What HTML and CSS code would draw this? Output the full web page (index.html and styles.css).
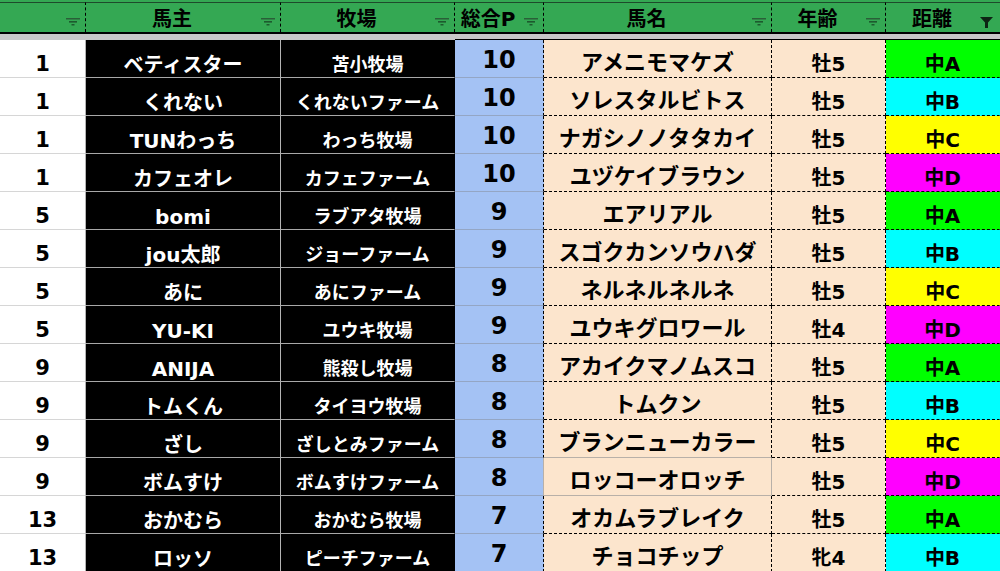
FILE: index.html
```html
<!DOCTYPE html>
<html lang="ja">
<head>
<meta charset="utf-8">
<title>Sheet</title>
<link rel="stylesheet" href="styles.css">
</head>
<body>
<div class="sheet">
  <div class="head">
    <div class="hc"><span class="label"></span><span class="flt"><svg width="14" height="8" viewBox="0 0 14 8"><rect x="0" y="0" width="14" height="1.5" fill="#2a5f38"/><rect x="3" y="3" width="8" height="1.6" fill="#1d5a2e"/><rect x="5.5" y="6" width="3" height="1.5" fill="#1d5a2e"/></svg></span></div>
    <div class="hc"><span class="label">馬主</span><span class="flt"><svg width="14" height="8" viewBox="0 0 14 8"><rect x="0" y="0" width="14" height="1.5" fill="#2a5f38"/><rect x="3" y="3" width="8" height="1.6" fill="#1d5a2e"/><rect x="5.5" y="6" width="3" height="1.5" fill="#1d5a2e"/></svg></span></div>
    <div class="hc"><span class="label">牧場</span><span class="flt"><svg width="14" height="8" viewBox="0 0 14 8"><rect x="0" y="0" width="14" height="1.5" fill="#2a5f38"/><rect x="3" y="3" width="8" height="1.6" fill="#1d5a2e"/><rect x="5.5" y="6" width="3" height="1.5" fill="#1d5a2e"/></svg></span></div>
    <div class="hc"><span class="label">総合P</span><span class="flt"><svg width="14" height="8" viewBox="0 0 14 8"><rect x="0" y="0" width="14" height="1.5" fill="#2a5f38"/><rect x="3" y="3" width="8" height="1.6" fill="#1d5a2e"/><rect x="5.5" y="6" width="3" height="1.5" fill="#1d5a2e"/></svg></span></div>
    <div class="hc"><span class="label">馬名</span><span class="flt"><svg width="14" height="8" viewBox="0 0 14 8"><rect x="0" y="0" width="14" height="1.5" fill="#2a5f38"/><rect x="3" y="3" width="8" height="1.6" fill="#1d5a2e"/><rect x="5.5" y="6" width="3" height="1.5" fill="#1d5a2e"/></svg></span></div>
    <div class="hc"><span class="label">年齢</span><span class="flt"><svg width="14" height="8" viewBox="0 0 14 8"><rect x="0" y="0" width="14" height="1.5" fill="#2a5f38"/><rect x="3" y="3" width="8" height="1.6" fill="#1d5a2e"/><rect x="5.5" y="6" width="3" height="1.5" fill="#1d5a2e"/></svg></span></div>
    <div class="hc"><span class="label">距離</span><span class="flt funnel"><svg width="13" height="11" viewBox="0 0 13 11"><polygon points="0,0 13,0 8,5.5 8,11 5,11 5,5.5" fill="#0d2414"/></svg></span></div>
  </div>
  <div class="band">
    <div class="bc"></div><div class="bc"></div><div class="bc"></div>
    <div class="bc edge"></div><div class="bc edge"></div><div class="bc edge"></div><div class="bc edge"></div>
  </div>

  <div class="row"><div class="c a">1</div><div class="c b">ベティスター</div><div class="c cc">苫小牧場</div><div class="c d">10</div><div class="c e">アメニモマケズ</div><div class="c f">牡5</div><div class="c g ga">中A</div></div>
  <div class="row"><div class="c a">1</div><div class="c b">くれない</div><div class="c cc">くれないファーム</div><div class="c d">10</div><div class="c e">ソレスタルビトス</div><div class="c f">牡5</div><div class="c g gb">中B</div></div>
  <div class="row"><div class="c a">1</div><div class="c b">TUNわっち</div><div class="c cc">わっち牧場</div><div class="c d">10</div><div class="c e">ナガシノノタタカイ</div><div class="c f">牡5</div><div class="c g gc">中C</div></div>
  <div class="row"><div class="c a">1</div><div class="c b">カフェオレ</div><div class="c cc">カフェファーム</div><div class="c d">10</div><div class="c e">ユヅケイブラウン</div><div class="c f">牡5</div><div class="c g gd">中D</div></div>
  <div class="row"><div class="c a">5</div><div class="c b">bomi</div><div class="c cc">ラブアタ牧場</div><div class="c d">9</div><div class="c e">エアリアル</div><div class="c f">牡5</div><div class="c g ga">中A</div></div>
  <div class="row"><div class="c a">5</div><div class="c b">jou太郎</div><div class="c cc">ジョーファーム</div><div class="c d">9</div><div class="c e">スゴクカンソウハダ</div><div class="c f">牡5</div><div class="c g gb">中B</div></div>
  <div class="row"><div class="c a">5</div><div class="c b">あに</div><div class="c cc">あにファーム</div><div class="c d">9</div><div class="c e">ネルネルネルネ</div><div class="c f">牡5</div><div class="c g gc">中C</div></div>
  <div class="row"><div class="c a">5</div><div class="c b">YU-KI</div><div class="c cc">ユウキ牧場</div><div class="c d">9</div><div class="c e">ユウキグロワール</div><div class="c f">牡4</div><div class="c g gd">中D</div></div>
  <div class="row"><div class="c a">9</div><div class="c b">ANIJA</div><div class="c cc">熊殺し牧場</div><div class="c d">8</div><div class="c e">アカイクマノムスコ</div><div class="c f">牡5</div><div class="c g ga">中A</div></div>
  <div class="row"><div class="c a">9</div><div class="c b">トムくん</div><div class="c cc">タイヨウ牧場</div><div class="c d">8</div><div class="c e">トムクン</div><div class="c f">牡5</div><div class="c g gb">中B</div></div>
  <div class="row pre"><div class="c a">9</div><div class="c b">ざし</div><div class="c cc">ざしとみファーム</div><div class="c d">8</div><div class="c e">ブランニューカラー</div><div class="c f">牡5</div><div class="c g gc">中C</div></div>
  <div class="row alt"><div class="c a">9</div><div class="c b">ボムすけ</div><div class="c cc">ボムすけファーム</div><div class="c d">8</div><div class="c e">ロッコーオロッチ</div><div class="c f">牡5</div><div class="c g gd">中D</div></div>
  <div class="row"><div class="c a">13</div><div class="c b">おかむら</div><div class="c cc">おかむら牧場</div><div class="c d">7</div><div class="c e">オカムラブレイク</div><div class="c f">牡5</div><div class="c g ga">中A</div></div>
  <div class="row"><div class="c a">13</div><div class="c b">ロッソ</div><div class="c cc">ピーチファーム</div><div class="c d">7</div><div class="c e">チョコチップ</div><div class="c f">牝4</div><div class="c g gb">中B</div></div>
</div>
</body>
</html>
```

FILE: styles.css
```css
html, body {
  margin: 0;
  padding: 0;
  background: #ffffff;
  overflow: hidden;
}

.sheet {
  width: 1000px;
  font-family: "DejaVu Sans", "Noto Sans CJK JP", sans-serif;
  font-weight: 700;
  color: #000;
}

.head, .band, .row {
  display: grid;
  grid-template-columns: 86px 195px 174px 89px 228px 114px 114px;
}

/* header */
.head {
  background: #34a853;
  padding-top: 2px;
  border-bottom: 2px solid #000;
}

.hc {
  height: 29px;
  border-top: 1px solid #1e4a2b;
  border-right: 1px dashed #000;
  display: flex;
  align-items: flex-end;
  font-size: 20px;
  line-height: 1;
}
.hc:last-child { border-right: none; }

.label {
  flex: 1;
  text-align: center;
  padding-bottom: 3px;
  white-space: nowrap;
}

.flt {
  width: 22px;
  align-self: flex-start;
  display: flex;
  justify-content: flex-end;
  padding-right: 5px;
  box-sizing: border-box;
  margin-top: 15px;
}
.flt svg { display: block; }
.funnel { margin-top: 14px; padding-right: 7px; }

/* gray band under header */
.band { height: 6px; }
.bc { background: #c8c8c8; }
.bc.edge { border-bottom: 1px solid #000; }

/* rows */
.row { height: 38px; }

.c {
  display: flex;
  align-items: flex-end;
  justify-content: center;
  line-height: 1;
  white-space: nowrap;
  box-sizing: border-box;
  border-bottom: 1px solid transparent;
  border-right: 1px solid transparent;
}

.a {
  background: #fff;
  font-size: 21px;
  padding-bottom: 2px;
  border-bottom-color: #d6d6d6;
  border-right-color: #b4b4b4;
}

.b {
  background: #000;
  color: #fff;
  font-size: 20px;
  padding-bottom: 2px;
  border-bottom-color: #a8a8a8;
  border-right-color: #b4b4b4;
}

.cc {
  background: #000;
  color: #fff;
  font-size: 18px;
  padding-bottom: 3px;
  border-bottom-color: #a8a8a8;
  border-right-color: #000;
}

.d {
  background: #a4c2f4;
  font-size: 24px;
  padding-bottom: 5px;
  border-bottom-color: #94a6c4;
  border-right: 1px dashed #000;
}

.e {
  background: #fce5cd;
  font-size: 22px;
  padding-bottom: 3px;
  border-bottom: 1px dashed #000;
  border-right: 1px dashed #000;
}

.f {
  background: #fce5cd;
  font-size: 20px;
  padding-bottom: 3px;
  border-bottom: 1px dashed #000;
  border-right: 1px dashed #000;
}

.g {
  font-size: 20px;
  padding-bottom: 3px;
  border-bottom: 1px dashed #000;
}
.ga { background: #00ff00; }
.gb { background: #00ffff; }
.gc { background: #ffff00; }
.gd { background: #ff00ff; }

.pre .e { border-bottom: 1px solid #b8b0a8; }
.alt .d { border-right: 1px solid #b8b0a8; }
.alt .e {
  border-bottom: 1px solid #b8b0a8;
  border-right: 1px solid #b8b0a8;
}
```
